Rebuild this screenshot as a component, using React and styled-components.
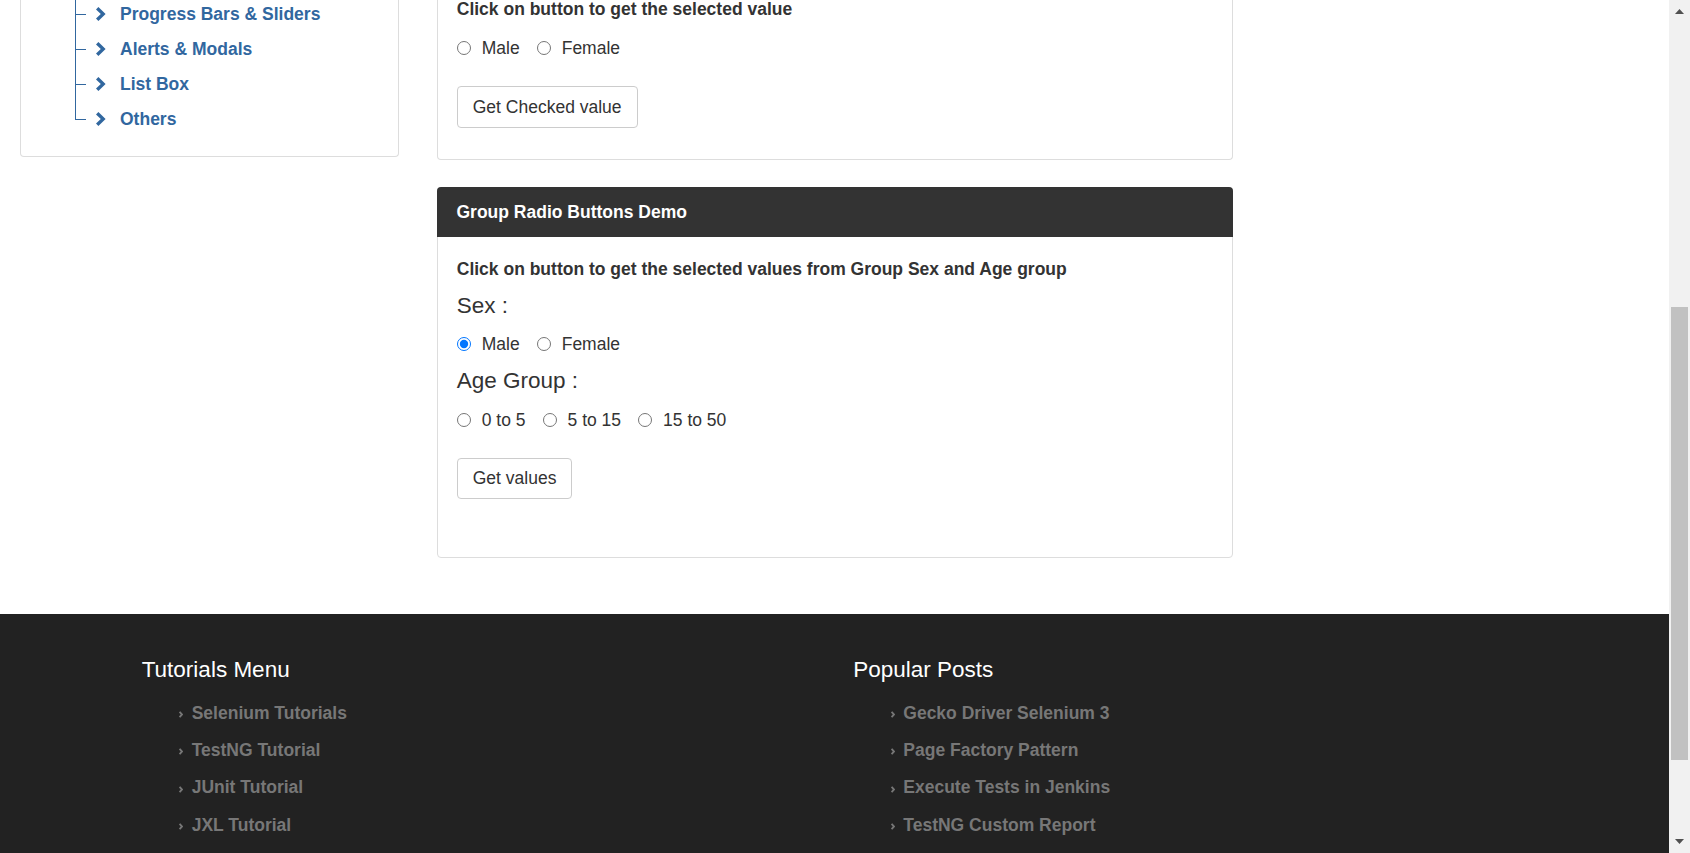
import React from "react";
import styled, { createGlobalStyle } from "styled-components";

const GlobalStyle = createGlobalStyle`
  html, body {
    margin: 0;
    padding: 0;
  }
  body {
    font-family: "Liberation Sans", Arial, sans-serif;
    color: #333;
    background: #fff;
    overflow: hidden;
  }
`;

const LINK_BLUE = "#31679f";

const Frame = styled.div`
  display: flex;
  width: 1690px;
  height: 853px;
  overflow: hidden;
`;

const Page = styled.div`
  flex: 1;
  min-width: 0;
  display: flex;
  flex-direction: column;
`;

const Content = styled.div`
  display: flex;
  align-items: flex-start;
  padding: 0 0 56px 20px;
`;

const Sidebar = styled.div`
  width: 379px;
  box-sizing: border-box;
  border: 1px solid #ddd;
  border-top: none;
  border-radius: 0 0 4px 4px;
  padding: 0 0 19px 54px;
`;

const TreeList = styled.ul`
  list-style: none;
  margin: -3.5px 0 0;
  padding: 0;
`;

const TreeItem = styled.li`
  position: relative;
  height: 35px;
  display: flex;
  align-items: center;
  padding-left: 21px;
  gap: 13px;

  &::before {
    content: "";
    position: absolute;
    left: 0;
    top: ${(p) => (p.$first ? "-4px" : "0")};
    bottom: ${(p) => (p.$last ? "50%" : "0")};
    border-left: 1px solid ${LINK_BLUE};
  }

  &::after {
    content: "";
    position: absolute;
    left: 0;
    top: 50%;
    width: 11px;
    border-top: 1px solid ${LINK_BLUE};
  }
`;

const TreeLink = styled.a`
  font-size: 17.5px;
  font-weight: 700;
  color: ${LINK_BLUE};
  text-decoration: none;
`;

const MainColumn = styled.div`
  margin-left: 38px;
  width: 796px;
  display: flex;
  flex-direction: column;
  gap: 27px;
`;

const Panel = styled.div`
  box-sizing: border-box;
  background: #fff;
  border: 1px solid #ddd;
  border-top: ${(p) => (p.$cut ? "none" : "1px solid #ddd")};
  border-radius: ${(p) => (p.$cut ? "0 0 4px 4px" : "4px")};
`;

const PanelHeading = styled.div`
  margin: -1px -1px 0;
  height: 50px;
  display: flex;
  align-items: center;
  padding-left: 19.5px;
  background: #333;
  color: #fff;
  font-size: 17.5px;
  font-weight: 700;
  border-radius: 4px 4px 0 0;
`;

const PanelBody = styled.div`
  padding: ${(p) => p.$top}px 18.75px ${(p) => p.$bottom}px;
  display: flex;
  flex-direction: column;
  align-items: flex-start;
`;

const Instruction = styled.p`
  margin: ${(p) => p.$mt || 0}px 0 0;
  font-size: 17.5px;
  font-weight: 700;
  line-height: 25px;
`;

const GroupLabel = styled.h4`
  margin: ${(p) => p.$mt}px 0 0;
  font-size: 22.5px;
  font-weight: 400;
  line-height: 27px;
`;

const RadioRow = styled.div`
  display: flex;
  align-items: center;
  height: 25px;
  margin-top: ${(p) => p.$mt}px;
`;

const RadioOption = styled.label`
  display: inline-flex;
  align-items: center;
  gap: 11px;
  margin-right: 17px;
  font-size: 17.5px;
`;

const RadioInput = styled.input`
  width: 14px;
  height: 14px;
  margin: 0;
`;

const Button = styled.button`
  margin-top: ${(p) => p.$mt}px;
  height: ${(p) => p.$h}px;
  padding: 0 15px;
  background: #fff;
  border: 1px solid #ccc;
  border-radius: 4px;
  font-family: "Liberation Sans", Arial, sans-serif;
  font-size: 17.5px;
  color: #333;
`;

const Footer = styled.footer`
  flex: 1;
  background: #222;
  padding: 42.5px 0 0 141.7px;
  display: grid;
  grid-template-columns: 711.6px 1fr;
  align-items: start;
`;

const FooterTitle = styled.h3`
  margin: 0;
  font-size: 22.5px;
  font-weight: 400;
  line-height: 25px;
  color: #fff;
`;

const FooterList = styled.ul`
  list-style: none;
  margin: 13px 0 0;
  padding-left: 37.5px;
`;

const FooterItem = styled.li`
  display: flex;
  align-items: center;
  height: 37.3px;
  gap: 8.5px;
`;

const FooterLink = styled.a`
  font-size: 17.5px;
  font-weight: 700;
  color: #777;
  text-decoration: none;
`;

const Scrollbar = styled.div`
  width: 21px;
  background: #f1f1f1;
  display: flex;
  flex-direction: column;
  align-items: center;
`;

const ScrollArrow = styled.div`
  height: 21px;
  display: flex;
  align-items: ${(p) => (p.$down ? "flex-end" : "flex-start")};
  padding: ${(p) => (p.$down ? "0 0 9px" : "9px 0 0")};
  box-sizing: border-box;
`;

const ScrollTrack = styled.div`
  flex: 1;
  padding-top: 286px;
`;

const ScrollThumb = styled.div`
  width: 17px;
  height: 453px;
  background: #c1c1c1;
`;

const AngleIcon = styled.svg`
  margin-top: 3px;
  flex-shrink: 0;
`;

const Chevron = () => (
  <svg width="11" height="14" viewBox="0 0 11 14">
    <polygon points="0,2.4 2.4,0 9.6,7 2.4,14 0,11.6 4.8,7" fill={LINK_BLUE} />
  </svg>
);

const SmallAngle = () => (
  <AngleIcon width="4" height="7" viewBox="0 0 4 7">
    <polyline points="0.6,0.8 3,3.5 0.6,6.2" fill="none" stroke="#777" strokeWidth="1.9" />
  </AngleIcon>
);

const treeItems = ["Progress Bars & Sliders", "Alerts & Modals", "List Box", "Others"];
const tutorials = ["Selenium Tutorials", "TestNG Tutorial", "JUnit Tutorial", "JXL Tutorial"];
const posts = [
  "Gecko Driver Selenium 3",
  "Page Factory Pattern",
  "Execute Tests in Jenkins",
  "TestNG Custom Report",
];

const Radio = ({ name, label, checked }) => (
  <RadioOption>
    <RadioInput type="radio" name={name} defaultChecked={checked} />
    {label}
  </RadioOption>
);

const FooterColumn = ({ title, items }) => (
  <div>
    <FooterTitle>{title}</FooterTitle>
    <FooterList>
      {items.map((item) => (
        <FooterItem key={item}>
          <SmallAngle />
          <FooterLink href="#">{item}</FooterLink>
        </FooterItem>
      ))}
    </FooterList>
  </div>
);

const App = () => {
  return (
    <Frame>
      <GlobalStyle />
      <Page>
        <Content>
          <Sidebar>
            <TreeList>
              {treeItems.map((item, i) => (
                <TreeItem
                  key={item}
                  $first={i === 0}
                  $last={i === treeItems.length - 1}
                >
                  <Chevron />
                  <TreeLink href="#">{item}</TreeLink>
                </TreeItem>
              ))}
            </TreeList>
          </Sidebar>
          <MainColumn>
            <Panel $cut>
              <PanelBody $top={0} $bottom={31}>
                <Instruction $mt={-3.5}>Click on button to get the selected value</Instruction>
                <RadioRow $mt={14}>
                  <Radio name="single" label="Male" />
                  <Radio name="single" label="Female" />
                </RadioRow>
                <Button $mt={25.5} $h={42}>Get Checked value</Button>
              </PanelBody>
            </Panel>
            <Panel>
              <PanelHeading>Group Radio Buttons Demo</PanelHeading>
              <PanelBody $top={19.5} $bottom={58.5}>
                <Instruction>
                  Click on button to get the selected values from Group Sex and Age group
                </Instruction>
                <GroupLabel $mt={10}>Sex :</GroupLabel>
                <RadioRow $mt={13}>
                  <Radio name="sex" label="Male" checked />
                  <Radio name="sex" label="Female" />
                </RadioRow>
                <GroupLabel $mt={10}>Age Group :</GroupLabel>
                <RadioRow $mt={14}>
                  <Radio name="age" label="0 to 5" />
                  <Radio name="age" label="5 to 15" />
                  <Radio name="age" label="15 to 50" />
                </RadioRow>
                <Button $mt={25} $h={41}>Get values</Button>
              </PanelBody>
            </Panel>
          </MainColumn>
        </Content>
        <Footer>
          <FooterColumn title="Tutorials Menu" items={tutorials} />
          <FooterColumn title="Popular Posts" items={posts} />
        </Footer>
      </Page>
      <Scrollbar>
        <ScrollArrow>
          <svg width="9" height="5" viewBox="0 0 9 5">
            <polygon points="0,5 4.5,0 9,5" fill="#505050" />
          </svg>
        </ScrollArrow>
        <ScrollTrack>
          <ScrollThumb />
        </ScrollTrack>
        <ScrollArrow $down>
          <svg width="9" height="5" viewBox="0 0 9 5">
            <polygon points="0,0 9,0 4.5,5" fill="#505050" />
          </svg>
        </ScrollArrow>
      </Scrollbar>
    </Frame>
  );
};

export default App;
